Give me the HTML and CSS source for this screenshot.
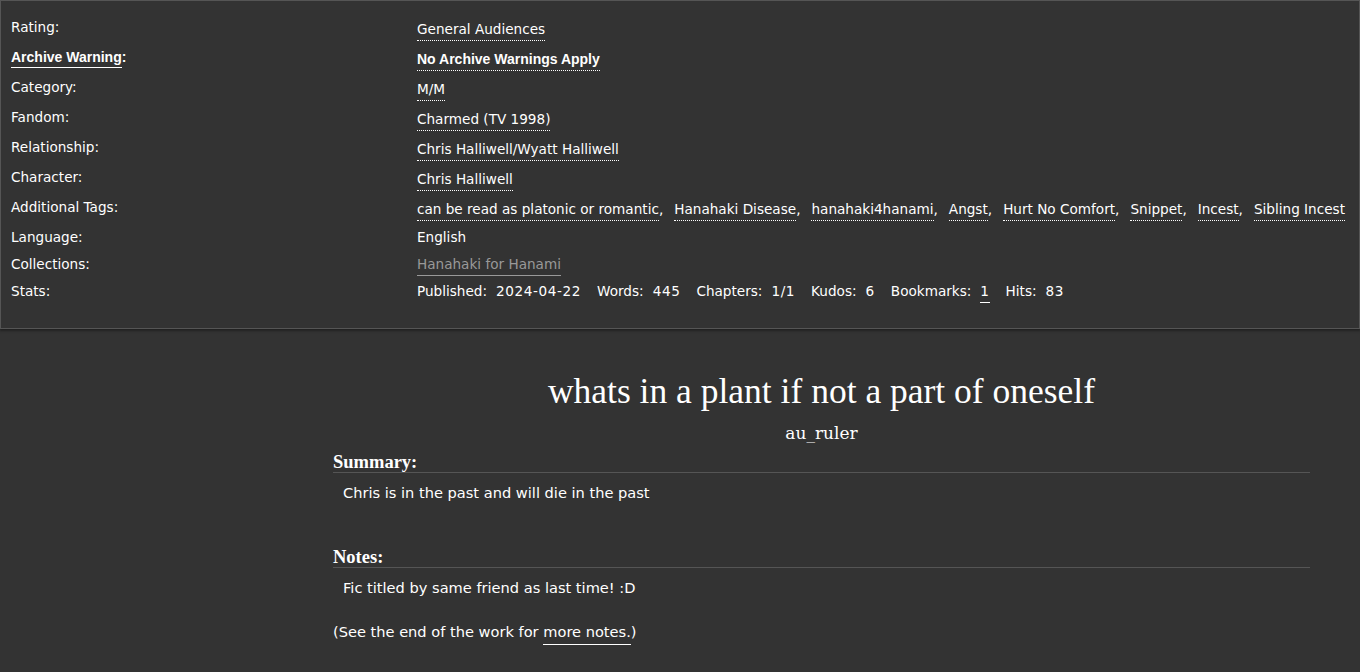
FILE: index.html
```html
<!DOCTYPE html>
<html>
<head>
<meta charset="utf-8">
<link rel="stylesheet" href="styles.css">
</head>
<body>
<div class="meta">
  <div class="row tagrow"><div class="label">Rating:</div><div class="value"><a class="tag">General Audiences</a></div></div>
  <div class="row tagrow"><div class="label bold"><span class="warn">Archive Warning</span>:</div><div class="value bold"><a class="tag">No Archive Warnings Apply</a></div></div>
  <div class="row tagrow"><div class="label">Category:</div><div class="value"><a class="tag">M/M</a></div></div>
  <div class="row tagrow"><div class="label">Fandom:</div><div class="value"><a class="tag">Charmed (TV 1998)</a></div></div>
  <div class="row tagrow"><div class="label">Relationship:</div><div class="value"><a class="tag">Chris Halliwell/Wyatt Halliwell</a></div></div>
  <div class="row tagrow"><div class="label">Character:</div><div class="value"><a class="tag">Chris Halliwell</a></div></div>
  <div class="row tagrow"><div class="label">Additional Tags:</div>
    <ul class="value tags">
      <li><a class="tag">can be read as platonic or romantic</a>,</li>
      <li><a class="tag">Hanahaki Disease</a>,</li>
      <li><a class="tag">hanahaki4hanami</a>,</li>
      <li><a class="tag">Angst</a>,</li>
      <li><a class="tag">Hurt No Comfort</a>,</li>
      <li><a class="tag">Snippet</a>,</li>
      <li><a class="tag">Incest</a>,</li>
      <li><a class="tag">Sibling Incest</a></li>
    </ul>
  </div>
  <div class="row plain"><div class="label">Language:</div><div class="value flat">English</div></div>
  <div class="row plain"><div class="label">Collections:</div><div class="value flat"><a class="coll">Hanahaki for Hanami</a></div></div>
  <div class="row plain"><div class="label">Stats:</div><dl class="value flat stats">
    <dt>Published:</dt><dd>2024-04-22</dd>
    <dt>Words:</dt><dd>445</dd>
    <dt>Chapters:</dt><dd>1/1</dd>
    <dt>Kudos:</dt><dd>6</dd>
    <dt>Bookmarks:</dt><dd><a class="ul">1</a></dd>
    <dt>Hits:</dt><dd>83</dd>
  </dl></div>
</div>

<div class="work">
  <h2 class="title">whats in a plant if not a part of oneself</h2>
  <h3 class="byline">au_ruler</h3>
  <div class="module">
    <h3 class="heading">Summary:</h3>
    <p class="userstuff">Chris is in the past and will die in the past</p>
  </div>
  <div class="module notes">
    <h3 class="heading">Notes:</h3>
    <p class="userstuff">Fic titled by same friend as last time! :D</p>
    <p class="jump">(See the end of the work for <a class="more">more notes.</a>)</p>
  </div>
</div>
</body>
</html>
```

FILE: styles.css
```css
html, body {
  margin: 0;
  padding: 0;
  background: #333;
  color: #fff;
  font-family: "DejaVu Sans", Verdana, sans-serif;
  font-size: 13.6px;
  line-height: 17px;
}

a { color: #fff; text-decoration: none; }

.meta {
  border: 1px solid #555;
  box-shadow: 0 2px 2px #222;
  padding: 18px 10px 18px 10px;
}

.row {
  display: flex;
}
.tagrow { height: 30px; }
.plain { height: 27px; }

.label {
  width: 406px;
  flex: none;
}
.value {
  padding-top: 2px;
  flex: 1;
  margin: 0;
}
.value.flat { padding-top: 0; }

.warn {
  border-bottom: 1px solid #fff;
  padding-bottom: 2px;
}
.bold {
  font-family: "Liberation Sans", Arial, sans-serif;
  font-weight: bold;
  font-size: 14px;
}

.tag {
  border-bottom: 1px dotted #fff;
  padding-bottom: 3px;
}
.tags {
  display: flex;
  gap: 11px;
  list-style: none;
  padding-left: 0;
  white-space: nowrap;
}

.coll {
  color: #999;
  border-bottom: 1px solid #999;
  padding-bottom: 3px;
}

.stats {
  display: flex;
}
.stats dt { margin-right: 9px; }
.stats dd { margin: 0 16px 0 0; letter-spacing: 0.6px; }

.ul {
  border-bottom: 1px solid #fff;
  padding-bottom: 3px;
}

.work {
  margin: 0 0 0 333px;
  width: 977px;
  font-size: 14.6px;
}

.title {
  font-family: "Liberation Serif", Georgia, serif;
  font-weight: normal;
  font-size: 35.5px;
  line-height: 40px;
  text-align: center;
  margin: 42px 0 0 0;
}
.byline {
  font-family: "DejaVu Serif", Georgia, serif;
  font-weight: normal;
  font-size: 17px;
  line-height: 22px;
  text-align: center;
  margin: 11px 0 0 0;
}

.heading {
  font-family: "Liberation Serif", Georgia, serif;
  font-weight: bold;
  font-size: 18.5px;
  line-height: 20px;
  margin: 0;
  border-bottom: 1px solid #555;
}
.module { margin-top: 8px; }
.userstuff {
  margin: 11px 0 0 10px;
}
.notes { margin-top: 46px; }
.jump { margin: 27px 0 0 0; }
.more {
  display: inline-block;
  line-height: 17px;
  border-bottom: 1px solid #fff;
  padding-bottom: 4px;
  vertical-align: top;
}
```
